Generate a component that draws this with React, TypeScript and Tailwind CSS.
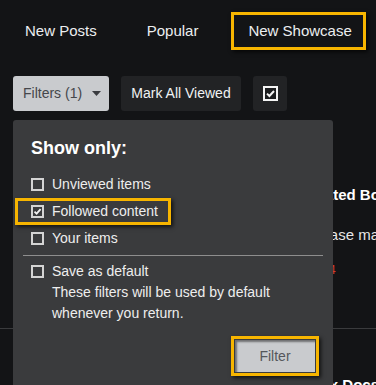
import React from "react";

const font = { fontFamily: '"Liberation Sans", Arial, sans-serif' };

function Box({ checked, light }: { checked?: boolean; light?: boolean }) {
  return (
    <svg width="13" height="13" viewBox="0 0 13 13" className="shrink-0">
      <rect x="1" y="1" width="11" height="11" fill="none" stroke={light ? "#f2f2f2" : "#d4d4d4"} strokeWidth="2" />
      {checked && <path d="M3.5 6.6 L5.6 8.6 L9.6 4.2" fill="none" stroke="#f2f2f2" strokeWidth="1.8" />}
    </svg>
  );
}

const navItems = ["New Posts", "Popular", "New Showcase"];

export default function App() {
  return (
    <div style={font} className="relative h-[385px] w-[376px] overflow-hidden bg-[#131416] text-[#eceef0]">
      <nav className="flex gap-[26px] pl-[8px] pt-[12px]">
        {navItems.map((item) => (
          <div
            key={item}
            className={`whitespace-nowrap border-[3px] pl-[14px] py-[7px] text-[15px] leading-[18px] ${
              item === "New Showcase"
                ? "border-[#f7b500] pr-[11px] shadow-[2px_2px_4px_rgba(0,0,0,0.7)]"
                : "border-transparent pr-[4px]"
            }`}
          >
            {item}
          </div>
        ))}
      </nav>

      <div className="mt-[26px] flex gap-[12px] pl-[13px]">
        <button className="flex h-[35px] w-[96px] items-center gap-[10px] rounded-[3px] bg-[#c9cbce] pl-[10px] text-[14px] text-[#45474b]">
          Filters (1)
          <svg width="9" height="5" viewBox="0 0 9 5">
            <path d="M0 0 H9 L4.5 5 Z" fill="#3a3c40" />
          </svg>
        </button>
        <button className="h-[35px] w-[120px] rounded-[3px] bg-[#222325] text-[14px] text-[#f0f2f4]">
          Mark All Viewed
        </button>
        <button className="flex h-[35px] w-[34px] items-center justify-center rounded-[3px] bg-[#222325]">
          <svg width="15" height="15" viewBox="0 0 15 15">
            <rect x="1" y="1" width="13" height="13" fill="#1b1c1e" stroke="#f4f4f4" strokeWidth="2" />
            <path d="M4 7.6 L6.4 10 L11 5" fill="none" stroke="#f4f4f4" strokeWidth="2" />
          </svg>
        </button>
      </div>

      {/* list behind the dropdown */}
      <div className="mt-[75px] pl-[299px]">
        <div className="whitespace-nowrap text-[15px] font-bold leading-[18px] text-white">Curated Books</div>
        <div className="mt-[22px] whitespace-nowrap text-[15px] leading-[18px] text-[#e6e6e6]">Release management</div>
        <div className="ml-[5px] mt-[17px] whitespace-nowrap text-[13px] leading-[18px] text-[#d23a2a]">Top 4</div>
        <div className="-ml-[299px] mt-[49px] h-px bg-[#3a3b3d]" />
        <div className="mt-[47px] whitespace-nowrap text-[15px] font-bold leading-[18px] text-white">Index Docs</div>
      </div>

      {/* filter menu */}
      <div className="absolute left-[13px] top-[120px] h-[280px] w-[320px] rounded-t-[3px] bg-[#3a3b3d] pt-[17px] text-[14px] text-[#eeeeee]">
        <div className="pl-[18px] text-[18px] font-bold leading-[22px] text-white">Show only:</div>
        <div className="mt-[12px] flex flex-col pl-[2px]">
          {[
            ["Unviewed items", false],
            ["Followed content", true],
            ["Your items", false],
          ].map(([label, on]) => (
            <label
              key={label as string}
              className={`flex h-[27px] w-fit items-center gap-[8px] border-[3px] pl-[13px] pr-[10px] leading-[21px] ${
                on ? "border-[#f7b500] shadow-[2px_2px_4px_rgba(0,0,0,0.7)]" : "border-transparent"
              }`}
            >
              <Box checked={on as boolean} />
              {label as string}
            </label>
          ))}
        </div>
        <div className="mx-[10px] mt-[3px] h-px bg-[#8e8e8e]" />
        <div className="pl-[18px] pt-[5px] leading-[21px]">
          <div className="flex items-center gap-[8px]">
            <Box />
            Save as default
          </div>
          <p className="pl-[21px]">
            These filters will be used by default
            <br />
            whenever you return.
          </p>
        </div>
        <div className="mt-[12px] flex justify-end pr-[14px]">
          <div className="border-[3px] border-[#f7b500] p-[1px] shadow-[2px_2px_4px_rgba(0,0,0,0.7)]">
            <button className="h-[32px] w-[80px] bg-[#c9cbce] text-[14px] text-[#55575b] shadow-[inset_2px_2px_2px_rgba(0,0,0,0.45)]">
              Filter
            </button>
          </div>
        </div>
      </div>
    </div>
  );
}
